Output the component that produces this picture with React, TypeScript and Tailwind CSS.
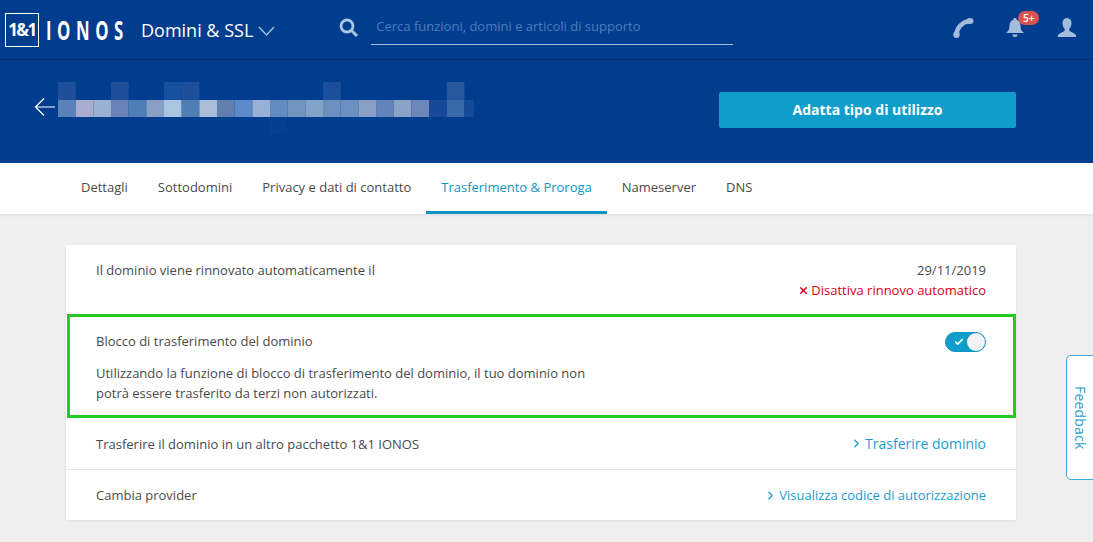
import { ChevronRight, X, Check } from "lucide-react"

const tabs = ["Dettagli", "Sottodomini", "Privacy e dati di contatto", "Trasferimento & Proroga", "Nameserver", "DNS"]

const topPixels = [
  { i: 0, c: "#1e4f9b" },
  { i: 3, c: "#1e4f98" },
  { i: 6, c: "#16509e" },
  { i: 7, c: "#1d4f9b" },
  { i: 15, c: "#1c4f9b" },
  { i: 22, c: "#27579c" },
]

const rowPixels = [
  "#5a82ba", "#a8acce", "#98b1d3", "#6b82b8", "#4f7db5", "#88a0c4", "#a9c5e0", "#4f7eb5",
  "#a9bcd8", "#617fae", "#5a8ac8", "#98b0d5", "#608cbf", "#7295c0", "#82a4c9", "#6b90bf",
  "#6a8fc0", "#8a9fc5", "#6384bb", "#8ba3c6", "#6e87bb", "#18489a", "#3a69aa", "#174a95",
]

function BlurredDomain() {
  return (
    <svg width="416" height="53" viewBox="0 0 416 53" className="block shrink-0">
      {topPixels.map((p) => (
        <rect key={p.i} x={p.i * 17.67} y="0" width="17.67" height="18" fill={p.c} />
      ))}
      {rowPixels.map((c, i) => (
        <rect key={i} x={i * 17.67} y="18" width="17.67" height="17" fill={c} />
      ))}
      <rect x="212" y="35" width="17" height="17" fill="#053f93" />
    </svg>
  )
}

export default function App() {
  return (
    <div className="h-[542px] w-[1093px] overflow-hidden bg-[#efefef] font-['Open_Sans',sans-serif] text-[13px] leading-[20px]">
      <header className="flex h-[60px] items-center border-b border-b-[#00306f] bg-[#003d8f] text-white">
        <div className="ml-[5px] flex h-[34px] w-[34px] items-center justify-center border border-white text-[17px] font-bold tracking-[-1.5px]">
          1&amp;1
        </div>
        <span className="ml-[7px] w-[77px] origin-left scale-x-[0.62] whitespace-nowrap text-[27px] font-bold tracking-[9px]">
          IONOS
        </span>
        <span className="ml-[18px] text-[18px]">Domini &amp; SSL</span>
        <svg width="17" height="10" viewBox="0 0 17 10" className="ml-[5px] mt-[3px]" fill="none" stroke="#a9c0de" strokeWidth="1.4">
          <path d="M1 1l7.5 8L16 1" />
        </svg>
        <svg width="20" height="20" viewBox="0 0 20 20" className="mb-[4px] ml-[64px]" fill="none">
          <circle cx="8" cy="8" r="6" stroke="#a9c5e6" strokeWidth="2.8" />
          <path d="M12.500 12.500L18 18" stroke="#a9c5e6" strokeWidth="3" />
        </svg>
        <div className="-mt-[1px] ml-[12px] flex h-[32px] w-[362px] items-center border-b border-b-[#a9bcd8] pb-[6px] pl-[5px] text-[13px] text-[#4f7cba]">
          Cerca funzioni, domini e articoli di supporto
        </div>
        <svg width="22" height="22" viewBox="0 0 22 22" className="mb-[4px] ml-[219px]" fill="none" stroke="#a4bcdc">
          <path d="M4.500 18C4.500 11 10 5 17.500 4" strokeWidth="4.500" />
          <ellipse cx="4.500" cy="17.500" rx="3.200" ry="3.600" fill="#a4bcdc" strokeWidth="0" />
          <ellipse cx="18" cy="4" rx="3.500" ry="3" fill="#a4bcdc" strokeWidth="0" />
        </svg>
        <div className="relative mb-[4px] ml-[31px] h-[22px] w-[20px]">
          <svg width="20" height="22" viewBox="0 0 20 22" fill="#a4bcdc">
            <path d="M10 1c1 0 1.700.7 1.700 1.700C14.500 3.500 15.500 6 15.500 9c0 3 1 5 3.500 7H1c2.500-2 3.500-4 3.500-7 0-3 1-5.500 3.800-6.300C8.300 1.700 9 1 10 1z" />
            <path d="M7.500 17.500h5a2.500 2.500 0 0 1-5 0z" />
          </svg>
          <span className="absolute left-[13px] top-[-6px] flex h-[14px] w-[21px] items-center justify-center rounded-full bg-[#d9534f] text-[10px] font-semibold leading-none text-white">
            5+
          </span>
        </div>
        <svg width="20" height="22" viewBox="0 0 20 22" className="mb-[4px] ml-[32px]" fill="#a4bcdc">
          <path d="M10 1c3 0 4.500 2.200 4.500 5 0 2.500-.9 4.500-2.200 5.800-.4 1.800.5 2.700 3 3.700 2.500.9 4 2 4 4.500H.7c0-2.500 1.500-3.600 4-4.500 2.500-1 3.400-1.900 3-3.700C6.400 10.500 5.500 8.500 5.500 6c0-2.800 1.500-5 4.500-5z" />
        </svg>
      </header>

      <section className="flex h-[103px] items-start bg-[#003d8f]">
        <svg width="22" height="20" viewBox="0 0 22 20" className="ml-[34px] mt-[37px] shrink-0" fill="none" stroke="#ffffff" strokeWidth="1.2">
          <path d="M21 10H1.500M10 1.500L1.500 10l8.500 8.500" />
        </svg>
        <div className="ml-[2px] mt-[22px]">
          <BlurredDomain />
        </div>
        <button className="ml-[245px] mt-[32px] h-[36px] w-[297px] rounded-[2px] bg-[#0f9dcc] text-[14px] font-bold text-white">
          Adatta tipo di utilizzo
        </button>
      </section>

      <nav className="flex h-[51px] bg-white pl-[66px] shadow-[0_1px_3px_rgba(0,0,0,0.08)]">
        {tabs.map((t) => (
          <div
            key={t}
            className={
              t === "Trasferimento & Proroga"
                ? "flex items-center border-b-[3px] border-b-[#0f94c4] px-[15px] text-[#0f94c4]"
                : "flex items-center px-[15px] pb-[3px] text-[#4a4a4a]"
            }
          >
            {t}
          </div>
        ))}
      </nav>

      <main className="relative pl-[66px] pt-[31px]">
        <div className="w-[950px] bg-white text-[#4a4a4a] shadow-[0_1px_3px_rgba(0,0,0,0.08)]">
          <div className="flex h-[69px] justify-between pl-[30px] pr-[30px] pt-[15px]">
            <span>Il dominio viene rinnovato automaticamente il</span>
            <div className="text-right">
              <div>29/11/2019</div>
              <div className="flex items-center justify-end text-[#dc0014]">
                <X size={11} strokeWidth={3} className="mr-[2px]" />
                Disattiva rinnovo automatico
              </div>
            </div>
          </div>
          <div className="ml-px flex h-[104px] justify-between border-[3px] border-[#22cc22] pl-[26px] pr-[27px] pt-[14px]">
            <div>
              <p>Blocco di trasferimento del dominio</p>
              <p className="mt-[12px] w-[510px]">
                Utilizzando la funzione di blocco di trasferimento del dominio, il tuo dominio non potrà essere
                trasferito da terzi non autorizzati.
              </p>
            </div>
            <div className="mt-[1px] flex h-[20px] w-[41px] items-center justify-between rounded-full border border-[#0f94c4] bg-[#0f9dcc] pl-[8px]">
              <Check size={10} strokeWidth={4} className="text-white" />
              <span className="h-[18px] w-[18px] rounded-full bg-[#f4f4f4]" />
            </div>
          </div>
          <div className="flex h-[52px] items-center justify-between border-b border-b-[#e6e6e6] px-[30px]">
            <span>Trasferire il dominio in un altro pacchetto 1&amp;1 IONOS</span>
            <a className="flex items-center text-[14px] text-[#1b9dd3]">
              <ChevronRight size={13} strokeWidth={2.5} className="mr-[2px]" />
              Trasferire dominio
            </a>
          </div>
          <div className="flex h-[50px] items-center justify-between px-[30px]">
            <span>Cambia provider</span>
            <a className="flex items-center text-[#1b9dd3]">
              <ChevronRight size={13} strokeWidth={2.5} className="mr-[2px]" />
              Visualizza codice di autorizzazione
            </a>
          </div>
        </div>
        <div className="absolute left-[1066px] top-[141px] flex h-[125px] w-[40px] items-center rounded-[5px] border border-[#3fa9d1] bg-white pl-[3px]">
          <span className="text-[14px] tracking-[0.2px] text-[#2aa0d0] [writing-mode:vertical-rl]">Feedback</span>
        </div>
      </main>
    </div>
  )
}
